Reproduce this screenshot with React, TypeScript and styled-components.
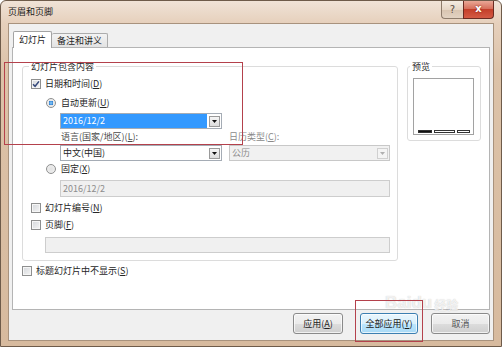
import React from "react";
import styled, { createGlobalStyle } from "styled-components";

const GlobalStyle = createGlobalStyle`
  html, body {
    margin: 0;
    padding: 0;
  }
  body {
    font-family: "Noto Sans CJK SC", "Liberation Sans", sans-serif;
    font-size: 9px;
    color: #262626;
  }
  * {
    box-sizing: border-box;
  }
`;

const Window = styled.div`
  position: relative;
  width: 502px;
  height: 347px;
  display: flex;
  flex-direction: column;
  padding: 0 7px 5px;
  border: 1px solid #6e5b4a;
  border-radius: 6px 6px 0 0;
  background: linear-gradient(180deg, #f0e3d7 0px, #e6d0bc 22px, #dcc2a8 70px, #d7ba9e 100%);
  overflow: hidden;
`;

const TitleBar = styled.div`
  height: 22px;
  display: flex;
  align-items: flex-start;
`;

const Title = styled.div`
  padding-top: 5px;
  line-height: 12px;
  color: #1a1a1a;
`;

const Controls = styled.div`
  margin-left: auto;
  display: flex;
`;

const HelpButton = styled.div`
  width: 22px;
  height: 18px;
  border: 1px solid #8d7b6b;
  border-top: none;
  border-right: none;
  border-radius: 0 0 0 4px;
  background: linear-gradient(180deg, #f4ebe2 0%, #e6d6c6 50%, #d8c4b0 51%, #e2d2c2 100%);
  color: #5b4d42;
  font-family: "DejaVu Sans", sans-serif;
  font-size: 10px;
  line-height: 17px;
  text-align: center;
`;

const CloseButton = styled.div`
  width: 31px;
  height: 18px;
  border: 1px solid #6a2b22;
  border-top: none;
  border-radius: 0 0 4px 0;
  background: linear-gradient(180deg, #e9a796 0%, #d6705c 45%, #c43f2a 50%, #d45a44 100%);
  color: #fff;
  font-family: "DejaVu Sans", sans-serif;
  font-weight: bold;
  font-size: 10px;
  line-height: 16px;
  text-align: center;
  text-shadow: 0 0 2px #7a1a10;
`;

const Client = styled.div`
  flex: 1;
  display: flex;
  flex-direction: column;
  background: #f0f0f0;
  border: 1px solid #a8927d;
  padding: 7px 3px 0;
`;

const TabStrip = styled.div`
  height: 17px;
  display: flex;
  align-items: flex-end;
  padding-left: 1px;
  margin-bottom: -1px;
  position: relative;
  z-index: 1;
`;

const Tab = styled.div<{ $active?: boolean }>`
  height: ${(p) => (p.$active ? "17px" : "14px")};
  margin-bottom: ${(p) => (p.$active ? "0" : "1px")};
  padding: ${(p) => (p.$active ? "2px 5px 0 5px" : "1px 5px 0 5px")};
  line-height: 12px;
  border: 1px solid ${(p) => (p.$active ? "#a3a3a3" : "#acacac")};
  border-bottom: none;
  border-left-width: ${(p) => (p.$active ? "1px" : "0")};
  background: ${(p) => (p.$active ? "#fff" : "linear-gradient(180deg, #f3f3f3, #e3e3e3)")};
  border-radius: 2px 2px 0 0;
`;

const Panel = styled.div`
  height: 263px;
  background: #fff;
  border: 1px solid #b4b4b4;
  display: flex;
  align-items: flex-start;
  padding: 13px 8px 0 9px;
  gap: 9px;
`;

const Column = styled.div`
  display: flex;
  flex-direction: column;
`;

const Group = styled.fieldset<{ $w: number; $h: number }>`
  margin: 0;
  padding: 0;
  width: ${(p) => p.$w}px;
  height: ${(p) => p.$h}px;
  border: 1px solid #dcdcdc;
  border-radius: 3px;
  display: flex;
  flex-direction: column;
  min-width: 0;
`;

const Legend = styled.legend<{ $ml: number }>`
  margin-left: ${(p) => p.$ml}px;
  padding: 0 2px;
  line-height: 11px;
  color: #2a2a2a;
`;

const Row = styled.div<{ $mt: number; $ml?: number; $gap?: number }>`
  display: flex;
  align-items: center;
  height: 12px;
  line-height: 12px;
  margin-top: ${(p) => p.$mt}px;
  margin-left: ${(p) => p.$ml ?? 0}px;
  gap: ${(p) => p.$gap ?? 4}px;
  white-space: nowrap;
`;

const FieldRow = styled.div<{ $mt: number; $ml: number }>`
  display: flex;
  margin-top: ${(p) => p.$mt}px;
  margin-left: ${(p) => p.$ml}px;
  gap: 7px;
`;

const Label = styled.span<{ $muted?: boolean; $w?: number }>`
  color: ${(p) => (p.$muted ? "#8a8a8a" : "#4a4a4a")};
  width: ${(p) => (p.$w ? `${p.$w}px` : "auto")};
`;

const Box = styled.span<{ $checked?: boolean }>`
  width: 10px;
  height: 10px;
  border: 1px solid #8e8f8f;
  background: linear-gradient(135deg, #d4d7db 0%, #f5f5f5 100%);
  box-shadow: inset 0 0 0 1px #f6f6f6;
  display: flex;
  align-items: center;
  justify-content: center;
  flex: none;
`;

const RadioDot = styled.span<{ $on?: boolean }>`
  width: 10px;
  height: 10px;
  border-radius: 50%;
  border: 1px solid #8e8f8f;
  background: ${(p) =>
    p.$on
      ? "radial-gradient(circle, #8fd0ff 0%, #2f7fd0 40%, #e8e8e8 45%, #f4f4f4 100%)"
      : "radial-gradient(circle, #e2e2e2 0%, #f2f2f2 100%)"};
  flex: none;
`;

const Combo = styled.div<{ $w: number; $disabled?: boolean }>`
  width: ${(p) => p.$w}px;
  height: 16px;
  border: 1px solid ${(p) => (p.$disabled ? "#c8c8c8" : "#a5acb5")};
  background: ${(p) => (p.$disabled ? "#f1f1f1" : "#fff")};
  display: flex;
  align-items: center;
  gap: 2px;
  padding-right: 1px;
`;

const ComboValue = styled.span<{ $selected?: boolean; $disabled?: boolean }>`
  flex: 1;
  height: 14px;
  line-height: 14px;
  padding-left: 2px;
  background: ${(p) => (p.$selected ? "#3399ff" : "transparent")};
  color: ${(p) => (p.$selected ? "#fff" : p.$disabled ? "#8d8d8d" : "#262626")};
`;

const ArrowButton = styled.span<{ $disabled?: boolean }>`
  width: 11px;
  height: 11px;
  border: 1px solid ${(p) => (p.$disabled ? "#d0d0d0" : "#9a9a9a")};
  background: ${(p) => (p.$disabled ? "#f4f4f4" : "linear-gradient(180deg, #f6f6f6, #dcdcdc)")};
  display: flex;
  align-items: center;
  justify-content: center;
  flex: none;
`;

const TextField = styled.div<{ $w: number; $h: number; $mt: number; $ml: number }>`
  width: ${(p) => p.$w}px;
  height: ${(p) => p.$h}px;
  margin-top: ${(p) => p.$mt}px;
  margin-left: ${(p) => p.$ml}px;
  border: 1px solid #cdcdcd;
  background: #f0f0f0;
  color: #8d8d8d;
  padding-left: 2px;
  line-height: ${(p) => p.$h - 2}px;
`;

const PreviewBox = styled.div`
  margin: 6px 0 0 5px;
  width: 61px;
  height: 57px;
  border: 1px solid #a2a2a2;
  background: #fff;
  display: flex;
  align-items: flex-end;
  gap: 2px;
  padding: 0 2px 1px 4px;
`;

const Bar = styled.span<{ $w: number; $filled?: boolean }>`
  width: ${(p) => p.$w}px;
  height: 3px;
  background: ${(p) => (p.$filled ? "#111" : "#fff")};
  border: 1px solid #333;
`;

const ButtonRow = styled.div`
  flex: 1;
  display: flex;
  justify-content: flex-end;
  align-items: flex-start;
  padding-top: 3px;
`;

const Button = styled.div<{ $w: number; $ml: number; $default?: boolean; $faded?: boolean }>`
  width: ${(p) => p.$w}px;
  height: 21px;
  margin-left: ${(p) => p.$ml}px;
  border: 1px solid ${(p) => (p.$default ? "#3c7fb1" : "#8a8a8a")};
  border-radius: 3px;
  background: ${(p) =>
    p.$default
      ? "linear-gradient(180deg, #eaf6fd 0%, #d9f0fc 50%, #bee6fd 51%, #a7d9f5 100%)"
      : "linear-gradient(180deg, #f2f2f2 0%, #ebebeb 50%, #dddddd 51%, #cfcfcf 100%)"};
  box-shadow: inset 0 0 0 1px rgba(255, 255, 255, 0.7);
  color: ${(p) => (p.$faded ? "#555" : "#222")};
  text-align: center;
  line-height: 19px;
`;

const Annotation = styled.div<{ $x: number; $y: number; $w: number; $h: number }>`
  position: absolute;
  left: ${(p) => p.$x}px;
  top: ${(p) => p.$y}px;
  width: ${(p) => p.$w}px;
  height: ${(p) => p.$h}px;
  border: 1px solid #b4414c;
  pointer-events: none;
  z-index: 5;
`;

const Watermark = styled.div`
  position: absolute;
  left: 384px;
  top: 292px;
  display: flex;
  align-items: flex-end;
  gap: 2px;
  color: rgba(255, 255, 255, 0.75);
  text-shadow: 0 0 1px rgba(120, 120, 120, 0.45);
  pointer-events: none;
  z-index: 4;
`;

const WatermarkLatin = styled.span`
  font-family: "Liberation Sans", sans-serif;
  font-weight: bold;
  font-size: 17px;
  line-height: 20px;
`;

const WatermarkCjk = styled.span`
  font-size: 12px;
  line-height: 16px;
  font-weight: bold;
`;

const Check = () => (
  <svg width="8" height="8" viewBox="0 0 8 8">
    <path d="M1 4.2 L3.1 6.3 L7 1.4" fill="none" stroke="#34487a" strokeWidth="1.5" />
  </svg>
);

const Arrow = ({ color }: { color: string }) => (
  <svg width="5" height="3" viewBox="0 0 5 3">
    <path d="M0 0 H5 L2.5 3 Z" fill={color} />
  </svg>
);

const CheckItem = ({ mt, ml, checked, children }: { mt: number; ml: number; checked?: boolean; children: React.ReactNode }) => (
  <Row $mt={mt} $ml={ml}>
    <Box>{checked && <Check />}</Box>
    <span>{children}</span>
  </Row>
);

const RadioItem = ({ mt, ml, on, children }: { mt: number; ml: number; on?: boolean; children: React.ReactNode }) => (
  <Row $mt={mt} $ml={ml} $gap={5}>
    <RadioDot $on={on} />
    <span>{children}</span>
  </Row>
);

const App = () => {
  return (
    <>
      <GlobalStyle />
      <Window>
        <TitleBar>
          <Title>页眉和页脚</Title>
          <Controls>
            <HelpButton>?</HelpButton>
            <CloseButton>x</CloseButton>
          </Controls>
        </TitleBar>
        <Client>
          <TabStrip>
            <Tab $active>幻灯片</Tab>
            <Tab>备注和讲义</Tab>
          </TabStrip>
          <Panel>
            <Column>
              <Group $w={376} $h={200}>
                <Legend $ml={6}>幻灯片包含内容</Legend>
                <CheckItem mt={6} ml={8} checked>
                  日期和时间(<u>D</u>)
                </CheckItem>
                <RadioItem mt={7} ml={23} on>
                  自动更新(<u>U</u>)
                </RadioItem>
                <FieldRow $mt={4} $ml={37}>
                  <Combo $w={162}>
                    <ComboValue $selected>2016/12/2</ComboValue>
                    <ArrowButton>
                      <Arrow color="#111" />
                    </ArrowButton>
                  </Combo>
                </FieldRow>
                <Row $mt={2} $ml={38} $gap={0}>
                  <Label $w={168}>
                    语言(国家/地区)(<u>L</u>):
                  </Label>
                  <Label $muted>
                    日历类型(<u>C</u>):
                  </Label>
                </Row>
                <FieldRow $mt={2} $ml={37}>
                  <Combo $w={162}>
                    <ComboValue>中文(中国)</ComboValue>
                    <ArrowButton>
                      <Arrow color="#111" />
                    </ArrowButton>
                  </Combo>
                  <Combo $w={161} $disabled>
                    <ComboValue $disabled>公历</ComboValue>
                    <ArrowButton $disabled>
                      <Arrow color="#b0b0b0" />
                    </ArrowButton>
                  </Combo>
                </FieldRow>
                <RadioItem mt={2} ml={23}>
                  固定(<u>X</u>)
                </RadioItem>
                <TextField $w={330} $h={17} $mt={5} $ml={37}>
                  2016/12/2
                </TextField>
                <CheckItem mt={5} ml={8}>
                  幻灯片编号(<u>N</u>)
                </CheckItem>
                <CheckItem mt={5} ml={8}>
                  页脚(<u>F</u>)
                </CheckItem>
                <TextField $w={345} $h={16} $mt={6} $ml={22} />
              </Group>
              <CheckItem mt={4} ml={0}>
                标题幻灯片中不显示(<u>S</u>)
              </CheckItem>
            </Column>
            <Group $w={75} $h={80}>
              <Legend $ml={2}>预览</Legend>
              <PreviewBox>
                <Bar $w={14} $filled />
                <Bar $w={21} />
                <Bar $w={13} />
              </PreviewBox>
            </Group>
          </Panel>
          <ButtonRow>
            <Button $w={50} $ml={0}>
              应用(<u>A</u>)
            </Button>
            <Button $w={58} $ml={17} $default>
              全部应用(<u>Y</u>)
            </Button>
            <Button $w={59} $ml={13} $faded>
              取消
            </Button>
          </ButtonRow>
        </Client>
        <Annotation $x={3} $y={61} $w={239} $h={83} />
        <Annotation $x={354} $y={299} $w={68} $h={42} />
        <Watermark>
          <WatermarkLatin>Baidu</WatermarkLatin>
          <WatermarkCjk>经验</WatermarkCjk>
        </Watermark>
      </Window>
    </>
  );
};

export default App;
